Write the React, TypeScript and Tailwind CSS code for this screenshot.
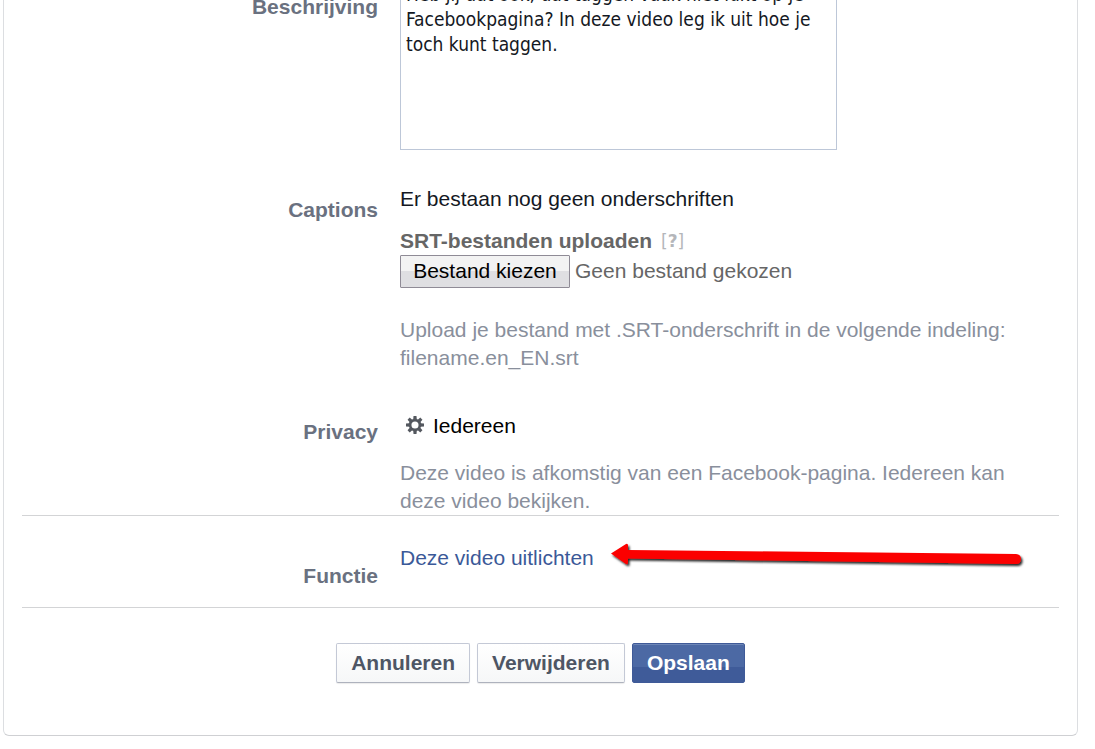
import { useState, type ReactNode } from 'react';

interface FieldRowProps {
  label: ReactNode;
  children: ReactNode;
  className?: string;
}

function FieldRow({ label, children, className = '' }: FieldRowProps) {
  return (
    <div className={`grid grid-cols-[356px_1fr] gap-x-[22px] ${className}`}>
      <div className="text-right font-bold text-[#6a7180]">{label}</div>
      <div className="min-w-0">{children}</div>
    </div>
  );
}

function GearIcon() {
  const teeth = [0, 45, 90, 135, 180, 225, 270, 315];
  return (
    <svg viewBox="0 0 18 18" className="mb-[2px] h-[18px] w-[18px]" aria-hidden="true">
      <circle cx="9" cy="9" r="4.9" fill="none" stroke="#54585f" strokeWidth="2.7" />
      {teeth.map((angle) => (
        <path key={angle} d="M7.5 0h3l.3 3.6H7.2z" fill="#54585f" transform={`rotate(${angle} 9 9)`} />
      ))}
    </svg>
  );
}

function RedArrow() {
  return (
    <svg
      viewBox="0 0 430 40"
      className="pointer-events-none absolute top-[-9px] left-full ml-[11px] h-10 w-[430px] max-w-none"
      aria-hidden="true"
    >
      <defs>
        <filter id="arrow-shadow" x="-5%" y="-40%" width="110%" height="200%">
          <feDropShadow dx="1.5" dy="2" stdDeviation="1.3" floodColor="#000" floodOpacity="0.85" />
        </filter>
      </defs>
      <path
        d="M6 18.5 L21 9 Q23 8 23 10.5 V15 L411 19 Q416 19.5 416 24 Q416 29 411 29 L23 23.5 V27.5 Q23 30 21 29 Z"
        fill="#fb0000"
        filter="url(#arrow-shadow)"
      />
    </svg>
  );
}

const lightButton =
  'h-10 rounded-[2px] border border-[#c4c9d6] border-b-[#aeb2bd] bg-linear-to-b from-white to-[#f6f7f8] px-[14px] font-bold text-[#4e5665] shadow-[0_1px_1px_rgba(0,0,0,0.08)]';

export default function App() {
  const [description, setDescription] = useState(
    'Heb jij dat ook, dat taggen vaak niet lukt op je Facebookpagina? In deze video leg ik uit hoe je toch kunt taggen.'
  );

  return (
    <div className="overflow-hidden bg-white pb-[13px] font-['Liberation_Sans',Arial,sans-serif] text-[21px] leading-7 text-[#141823]">
      <form
        className="mr-[17px] ml-[3px] rounded-b-md border border-t-0 border-[#dcdee1] border-b-[#cfd0d3] px-[18px] pb-[52px]"
        onSubmit={(e) => e.preventDefault()}
      >
        <FieldRow className="-mt-6" label={<label htmlFor="description" className="block pt-[17px]">Beschrijving</label>}>
          <textarea
            id="description"
            value={description}
            onChange={(e) => setDescription(e.target.value)}
            className="block h-[174px] w-[437px] resize-none overflow-hidden border border-[#bdc7d8] px-[5px] py-[5px] font-['DejaVu_Sans_Condensed','Noto_Sans',sans-serif] text-[19px] leading-[25px] outline-none"
          />
        </FieldRow>

        <FieldRow className="pt-[35px]" label={<div className="pt-[11px]">Captions</div>}>
          <p>Er bestaan nog geen onderschriften</p>
          <div className="mt-[14px] flex items-center font-bold text-[#666]">
            SRT-bestanden uploaden
            <button type="button" className="ml-[9px] font-['DejaVu_Sans',sans-serif] text-[17px] font-normal text-[#b4b6ba]">
              [<span className="font-bold">?</span>]
            </button>
          </div>
          <div className="flex items-center text-[#666]">
            <input id="srt" type="file" className="sr-only" />
            <label
              htmlFor="srt"
              className="mr-[5px] flex h-[33px] w-[170px] items-center justify-center rounded-[1px] border border-[#8f8b96] bg-linear-to-b from-[#f3f3f3] from-50% to-[#dfdfe2] to-50% pb-[2px] text-black"
            >
              Bestand kiezen
            </label>
            <span className="pb-[2px]">Geen bestand gekozen</span>
          </div>
          <p className="mt-7 text-[#898f9c]">
            Upload je bestand met .SRT-onderschrift in de volgende indeling:
            <br />
            filename.en_EN.srt
          </p>
        </FieldRow>

        <FieldRow className="border-b border-[#d3d4d6] pt-10" label={<div className="pt-[6px]">Privacy</div>}>
          <div className="flex items-center gap-[9px] pl-[6px] text-black">
            <GearIcon />
            Iedereen
          </div>
          <p className="mt-[19px] text-[#898f9c]">
            Deze video is afkomstig van een Facebook-pagina. Iedereen kan
            <br />
            deze video bekijken.
          </p>
        </FieldRow>

        <FieldRow className="border-b border-[#d3d4d6] pt-7 pb-[17px]" label={<div className="pt-[18px]">Functie</div>}>
          <div className="relative inline-block">
            <a href="#uitlichten" className="text-[#3b5998]">
              Deze video uitlichten
            </a>
            <RedArrow />
          </div>
        </FieldRow>

        <div className="flex justify-center gap-[7px] pt-[35px]">
          <button type="button" className={lightButton}>Annuleren</button>
          <button type="button" className={lightButton}>Verwijderen</button>
          <button
            type="submit"
            className="h-10 rounded-[2px] border border-[#3f5a98] bg-linear-to-b from-[#4c69a4] from-60% to-[#3f5b99] to-60% px-[14px] font-bold text-white shadow-[inset_0_1px_0_#6d86b7]"
          >
            Opslaan
          </button>
        </div>
      </form>
    </div>
  );
}
